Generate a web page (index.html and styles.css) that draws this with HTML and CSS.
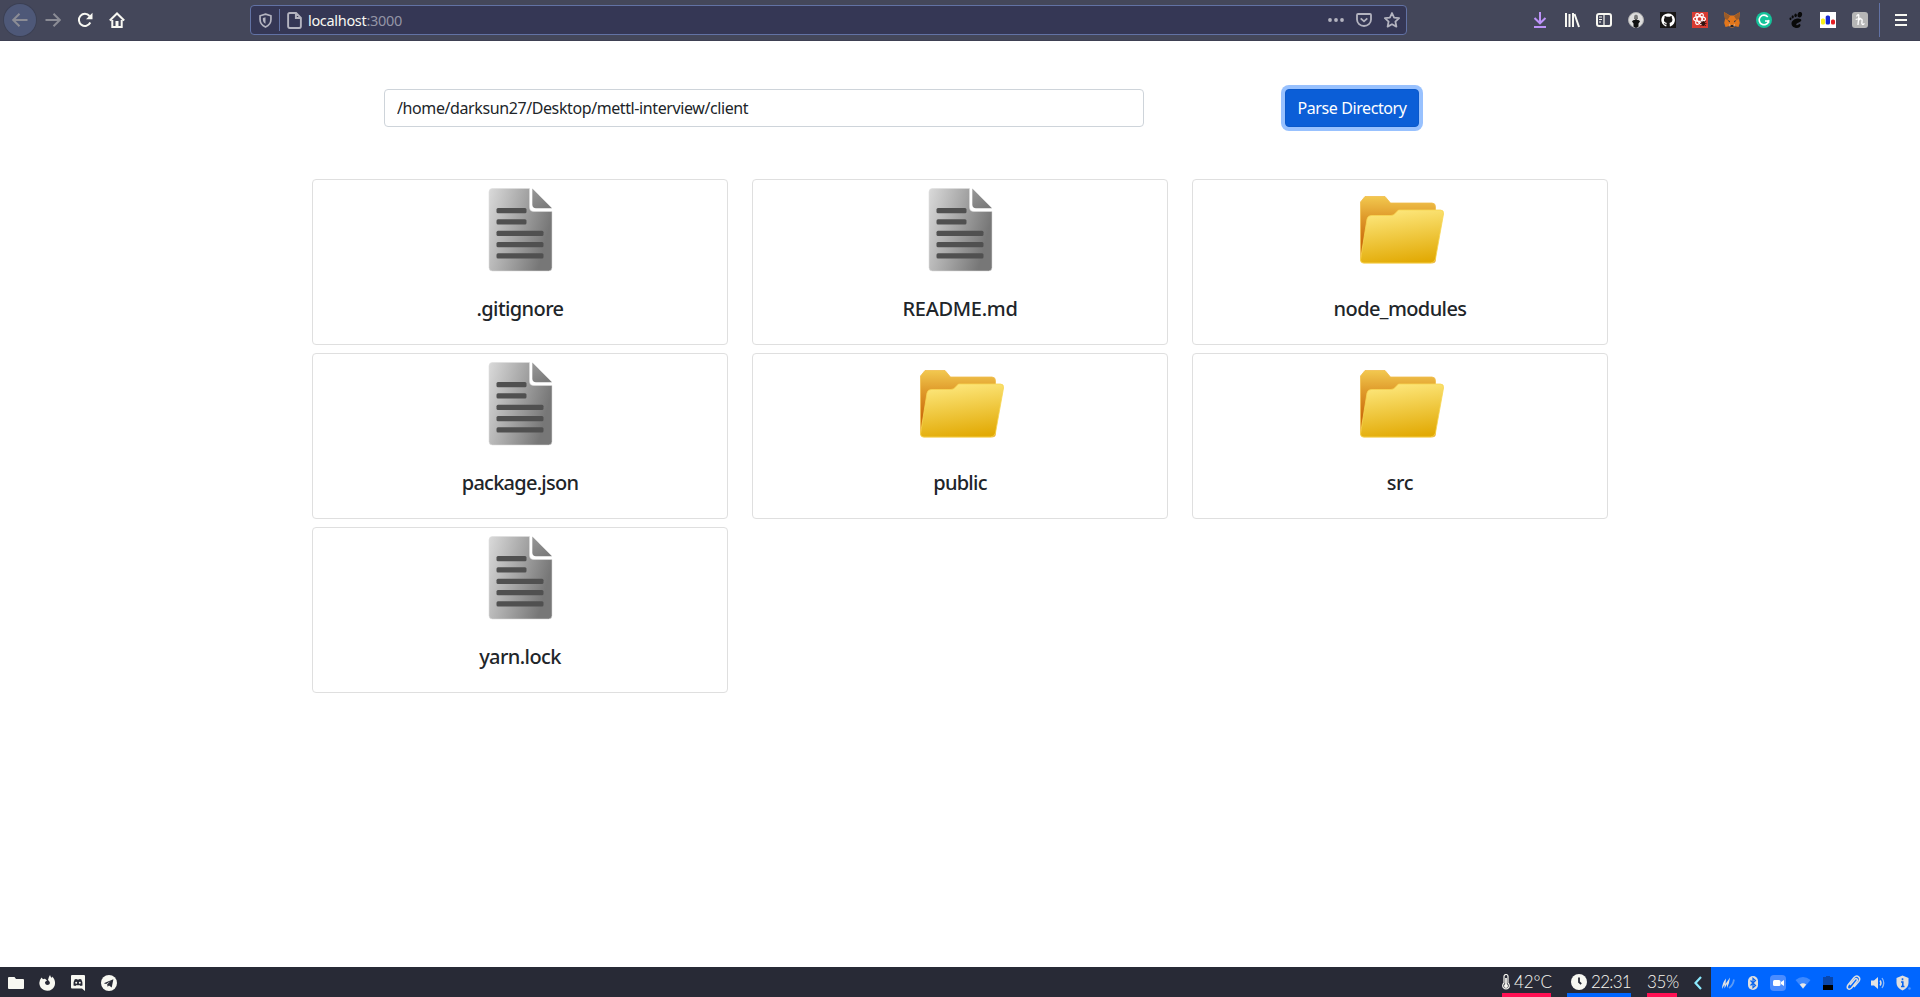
FILE: index.html
```
<!DOCTYPE html>
<html lang="en">
<head>
<meta charset="utf-8">
<title>Directory Parser</title>
<link rel="stylesheet" href="styles.css">
</head>
<body>
<svg class="defs" width="0" height="0" aria-hidden="true">
  <defs>
    <linearGradient id="paper" x1="0" y1="0" x2="1" y2=".35"><stop offset="0" stop-color="#dadada"/><stop offset=".5" stop-color="#a9a9a9"/><stop offset="1" stop-color="#777"/></linearGradient>
    <linearGradient id="fold" x1="0" y1="0" x2=".6" y2="1"><stop offset="0" stop-color="#999"/><stop offset="1" stop-color="#7b7b7b"/></linearGradient>
    <linearGradient id="back" x1="0" y1="0" x2="0" y2="1"><stop offset="0" stop-color="#f2c84f"/><stop offset=".3" stop-color="#e09c2c"/><stop offset=".7" stop-color="#cb6c0c"/><stop offset="1" stop-color="#d98a1c"/></linearGradient>
    <linearGradient id="front" x1=".35" y1="0" x2=".55" y2="1"><stop offset="0" stop-color="#fde77c"/><stop offset="1" stop-color="#e2aa05"/></linearGradient>
    <symbol id="file" viewBox="0 0 100 100">
      <path d="M22.500 7.500h37V26q0 4.500 4.500 4.500h18V86.500q0 3.500-3.500 3.500h-56q-3.500 0-3.500-3.500V11q0-3.500 3.500-3.500z" fill="url(#paper)" stroke="#ddd" stroke-opacity=".55"/>
      <path d="M62.300 7.500 82 27.200H66q-3.700 0-3.700-3.700z" fill="url(#fold)"/>
      <g fill="#505050"><rect x="26.500" y="27" width="30" height="5.200" rx="1.500"/><rect x="26.500" y="38.300" width="30" height="5.200" rx="1.500"/><rect x="26.500" y="49.700" width="47" height="5.200" rx="1.500"/><rect x="26.500" y="61" width="47" height="5.200" rx="1.500"/><rect x="26.500" y="72.200" width="47" height="5.200" rx="1.500"/></g>
    </symbol>
    <symbol id="folder" viewBox="0 0 100 100">
      <path d="M10.500 77V21l4.500-5.500h20l5.500 6.500H82q3.500 0 3.500 4V79q0 3-3 3H14q-3.500 0-3.500-5z" fill="url(#back)" stroke="#f1bd4b" stroke-width=".8"/>
      <path d="m10.500 79 6.500-41q.8-3.500 4.500-3.500H41q3 0 5-3l2.500-2.500h42q3.500 0 3 4L85.500 78q-1 4-5 4H14q-3.500 0-3.500-3z" fill="url(#front)" stroke="#f7d652" stroke-width=".8"/>
    </symbol>
  </defs>
</svg>

<header class="toolbar">
  <div class="nav">
    <span class="cell back-btn"><svg viewBox="0 0 16 16"><path class="line dim" d="M15.500 8H1.500M7.500 1.700 1.200 8l6.300 6.300"/></svg></span>
    <span class="cell"><svg viewBox="0 0 16 16"><path class="line dim" d="M.5 8h14M8.500 1.700 14.800 8l-6.300 6.300"/></svg></span>
    <span class="cell"><svg viewBox="0 0 16 16"><path class="line bold" d="M13.300 10.500A6 6 0 1 1 12.500 4"/><path class="solid" d="M15.500.8v6.400H9z"/></svg></span>
    <span class="cell"><svg viewBox="0 0 16 16"><path class="line bold" d="M.8 8.500 8 1.500l7.200 7M3.300 8v7h9.400V8"/><path class="solid" d="M6.500 9h3v6h-3z"/></svg></span>
  </div>
  <div class="url">
    <svg class="shield" viewBox="0 0 16 16"><path class="line grey" d="M8 1.200 13.800 3v4c0 4-2.500 6.500-5.800 8C4.700 13.500 2.200 11 2.200 7V3z"/><path d="M8 4.500v7C6 10.500 5.200 9 5.200 7V5.200z" class="greyfill"/></svg>
    <span class="divider"></span>
    <svg class="page" viewBox="0 0 16 16"><path class="line grey" d="M3.500 1h6L14 5.500V13.500q0 1.500-1.500 1.500h-9Q2 15 2 13.500v-11Q2 1 3.500 1zM9.300 1v4.700H14"/></svg>
    <span class="address">localhost<span class="port">:3000</span></span>
    <span class="cell28 first"><svg viewBox="0 0 16 16"><g class="greyfill"><circle cx="2" cy="8" r="1.900"/><circle cx="8" cy="8" r="1.900"/><circle cx="14" cy="8" r="1.900"/></g></svg></span>
    <span class="cell28"><svg viewBox="0 0 16 16"><path class="line grey" d="M2 2h12q1 0 1 1v4.500a7 6.500 0 0 1-14 0V3q0-1 1-1z"/><path class="line grey" d="m4.700 6.300 3.300 3 3.300-3"/></svg></span>
    <span class="cell28"><svg viewBox="0 0 16 16"><path class="line grey" stroke-linejoin="round" d="m8 1 2.100 4.600 5 .6-3.700 3.400 1 5L8 12.200l-4.400 2.400 1-5L.9 6.200l5-.6z"/></svg></span>
  </div>
  <div class="extensions">
    <span class="cell"><svg viewBox="0 0 16 16"><path class="line purple" d="M8 0v11M2.500 6 8 11.300 13.500 6M2 15h12"/></svg></span>
    <span class="cell"><svg viewBox="0 0 16 16"><path class="line bold" d="M2 1v14M5.500 2v13M9 1v14M10.500 2 15 15"/></svg></span>
    <span class="cell"><svg viewBox="0 0 16 16"><rect class="line bold" x="1" y="2" width="14" height="12" rx="2"/><path class="line thin" d="M8 2v12M3 5h3M3 7.500h3M3 10h2"/></svg></span>
    <span class="cell"><svg viewBox="0 0 16 16"><circle cx="8" cy="8" r="7.500" fill="#dedede" stroke="#b0b0b0"/><path d="M6.300 3.500 8 2.500l1.700 1 .3 3.500H6z" fill="#777"/><path d="M5.500 14.500v-3L4 9.500q1-2 2.500-1.500L8 7l1.500 1q1.800-.5 2.500 1.500l-1.500 2v3L8 16z" fill="#111"/></svg></span>
    <span class="cell"><svg viewBox="0 0 16 16"><rect width="16" height="16" fill="#191717"/><path fill="#fff" d="M8 1.500a6.600 6.600 0 0 0-2.100 12.900c.4.100.5-.2.500-.4v-1.400c-1.800.4-2.200-.7-2.600-1.300.9-.2 1.300 1 2.700.6 0-.4.200-.7.400-.9-2-.3-3-1.200-3-3.200 0-.7.300-1.400.7-1.900-.2-.6-.1-1.400.1-1.900.8 0 1.400.4 2 .8a7 7 0 0 1 3 0c.6-.4 1.200-.8 2-.8.200.6.200 1.300.1 1.900.4.500.6 1.100.6 1.900 0 2-1.200 2.900-3 3.200.3.300.4.700.4 1.300V14c0 .3.100.5.500.4A6.600 6.600 0 0 0 8 1.500z"/></svg></span>
    <span class="cell"><svg viewBox="0 0 16 16"><rect width="16" height="16" fill="#d83b32"/><g fill="none" stroke="#fff" stroke-width="1.200"><ellipse cx="7.500" cy="7" rx="6" ry="2.400"/><ellipse cx="7.500" cy="7" rx="6" ry="2.400" transform="rotate(60 7.500 7)"/><ellipse cx="7.500" cy="7" rx="6" ry="2.400" transform="rotate(120 7.500 7)"/></g><ellipse cx="11.300" cy="11.500" rx="1.800" ry="2.600" fill="#30130f"/><path d="m8.500 9 5.500 5M14 9l-5.500 5M8 11.500h6.500" stroke="#30130f" stroke-width=".8"/></svg></span>
    <span class="cell"><svg viewBox="0 0 16 16"><path d="m0 0 6 3.500h4L16 0l-1 7 .8 4-1.300 4-4-1-1 1.500h-3L5.500 14l-4 1L.2 11 1 7z" fill="#e2761b"/><path d="m0 0 6 4-2.500 4L1 7zM16 0l-6 4 2.500 4L15 7z" fill="#9a5b28"/><path d="m3.500 8 2.500 1-.5 1.500zM12.500 8 10 9l.5 1.500z" fill="#233447"/><path d="M6.500 13h3l.5 2H6z" fill="#2b2522"/><path d="M5 11.500 6.500 13 6 15zM11 11.500 9.500 13l.5 2z" fill="#d7c1b3"/></svg></span>
    <span class="cell"><svg viewBox="0 0 16 16"><circle cx="8" cy="8" r="8" fill="#15c39a"/><path d="M11.800 5A4.800 4.800 0 1 0 12.700 9H9" fill="none" stroke="#fff" stroke-width="1.600"/><path d="m12.500 7.500 1 3.500-3-1z" fill="#fff"/></svg></span>
    <span class="cell"><svg viewBox="0 0 16 16"><g fill="#090909"><ellipse cx="11.800" cy="2.700" rx="2.200" ry="2.800" transform="rotate(18 11.800 2.700)"/><ellipse cx="7.600" cy="3.300" rx="1.200" ry="1.900"/><ellipse cx="4.700" cy="4.800" rx="1.100" ry="1.600"/><ellipse cx="2.500" cy="6.800" rx="1" ry="1.400"/><path d="M12.500 7C9 5.300 3.500 8 3.500 11.500c0 3 3 4.500 5.500 4.500 3.500 0 4.500-4 2.500-4-1.200 0-1.500 1.700-2.700 1.200-1.500-.8.200-2.200 2-2.800C13 9.600 14.300 8 12.500 7z"/></g></svg></span>
    <span class="cell"><svg viewBox="0 0 16 16"><rect width="16" height="16" fill="#fff"/><rect x="1" y="6.500" width="4" height="6" rx="1.500" fill="#f8ed19"/><rect x="5.700" y="3.500" width="4.300" height="9" rx="1.500" fill="#1528d4"/><rect x="11" y="7.500" width="4" height="5" rx="1.500" fill="#e51e23"/></svg></span>
    <span class="cell"><svg viewBox="0 0 16 16"><rect width="16" height="16" rx="3" fill="#b6b6b6"/><path d="M4.500 4.500C5.500 2 7 2 6.800 4L6 13M3.700 7.500l5-1.500M6.300 9c1-2.500 4-3 3.800-.5-.2 2-.7 4 .8 4 .8 0 1.200-.7 1.500-1.200" fill="none" stroke="#fff" stroke-width="1.300"/></svg></span>
  </div>
  <span class="menu-divider"></span>
  <span class="cell menu"><svg viewBox="0 0 16 16"><path class="line bold" d="M2 3h12M2 8h12M2 13h12"/></svg></span>
</header>

<main class="container">
  <form class="search">
    <input class="path" type="text" value="/home/darksun27/Desktop/mettl-interview/client">
    <button class="parse" type="button">Parse Directory</button>
  </form>
  <section class="grid">
    <article class="card"><svg class="pic"><use href="#file"/></svg><h5>.gitignore</h5></article>
    <article class="card"><svg class="pic"><use href="#file"/></svg><h5 class="loose">README.md</h5></article>
    <article class="card"><svg class="pic"><use href="#folder"/></svg><h5>node_modules</h5></article>
    <article class="card"><svg class="pic"><use href="#file"/></svg><h5 class="tight">package.json</h5></article>
    <article class="card"><svg class="pic"><use href="#folder"/></svg><h5 class="tight">public</h5></article>
    <article class="card"><svg class="pic"><use href="#folder"/></svg><h5 class="loose">src</h5></article>
    <article class="card"><svg class="pic"><use href="#file"/></svg><h5>yarn.lock</h5></article>
  </section>
</main>

<footer class="panel">
  <div class="apps">
    <svg viewBox="0 0 16 16"><path class="solid" d="M1 2h5.500L8 4h7q1 0 1 1v8q0 1-1 1H1q-1 0-1-1V3q0-1 1-1z"/></svg>
    <svg viewBox="0 0 16 16"><path class="solid" d="M2.500 2.500 4 4.200q1-.5 2-.4L8 5.500 6 7q0 3 2.500 3 2 0 2.500-2-.5-2-2-3 .5-3 2-5 .5 2 2 3l.2-1.500C17 5 17 11 13.300 14A8 8 0 0 1 .3 8Q.4 5 2.500 2.500z"/></svg>
    <svg viewBox="0 0 16 16"><path fill-rule="evenodd" class="solid" d="M2 0h12q1 0 1 1v15l-3-2.500H2q-1 0-1-1V1q0-1 1-1zm1.500 10.500 2 .5.500-.8h4l.5.8 2-.5q.3-4-1.300-6.200L9.500 4 9 4.500H7L6.500 4l-1.700.3Q3.200 6.500 3.500 10.500z"/><circle class="solid" cx="6.200" cy="7.800" r="1"/><circle class="solid" cx="9.800" cy="7.800" r="1"/></svg>
    <svg viewBox="0 0 16 16"><circle class="solid" cx="8" cy="8" r="8"/><path d="m2.800 8.200 9.600-4-1.700 8.200-2.700-2-1.400 1.400-.4-2.500 3.600-3.300-4.700 2.900z" fill="#282a36"/></svg>
  </div>
  <div class="status">
    <span class="stat temp"><svg viewBox="0 0 8 16"><path d="M2 9V2.500a2 2 0 0 1 4 0V9a3.300 3.300 0 1 1-4 0z" fill="none" stroke="#f8f8f2" stroke-width="1.200"/><path d="M4 4v8" stroke="#f8f8f2" stroke-width="1.700"/><circle class="solid" cx="4" cy="12" r="2"/></svg><span>42°C</span></span>
    <span class="stat clock"><svg viewBox="0 0 16 16"><circle class="solid" cx="8" cy="8" r="8"/><path d="M8 3.500V8l2.200 2" fill="none" stroke="#282a36" stroke-width="1.800"/></svg><span>22:31</span></span>
    <span class="stat battery"><span>35%</span></span>
    <svg class="chev" viewBox="0 0 8 14"><path d="M7 1 1.500 7 7 13" fill="none" stroke="#8be9fd" stroke-width="2.200"/></svg>
  </div>
  <div class="tray">
    <span><svg viewBox="0 0 16 16"><path d="M2 14Q2 8 6 3.500L5.500 9 10 2.500Q9.500 8 7 13V9L4.500 13.500V9.500z" fill="#e2e2e2"/><path d="M9 13q4-2.500 5-8.500" fill="none" stroke="#5c9bf5" stroke-width="1.700"/></svg></span>
    <span><svg viewBox="0 0 16 16"><rect x="3" y="1" width="10" height="14" rx="5" fill="#dfdfdf"/><path d="m5.500 5.500 5 5L8 12.700V3.300l2.500 2.200-5 5" fill="none" stroke="#0864ed" stroke-width="1.200"/></svg></span>
    <span><svg viewBox="0 0 16 16"><rect width="16" height="16" rx="4" fill="#4a8cff"/><rect x="3" y="5" width="7.500" height="6" rx="1.500" fill="#fff"/><path d="m11 7 3-2v6l-3-2z" fill="#fff"/></svg></span>
    <span><svg viewBox="0 0 16 16"><path d="M.5 5Q8-1 15.500 5L8 14z" fill="#3d89ff"/><path d="M4.800 9.500Q8 7 11.200 9.500L8 13.500z" fill="#e7e7e7"/></svg></span>
    <span><svg viewBox="0 0 16 16"><path d="M3 2h3V1h4v1h3v8H3z" fill="#0947ad"/><path d="M3 10h10v5H3z" fill="#000"/></svg></span>
    <span><svg viewBox="0 0 16 16"><path d="m5 10 5-6q1-1 2 0t0 2l-5.500 7q-2 2-3.500.7T3 10l6-7.500q2.500-2.500 4.600-.6t.3 4.500L9 12" fill="none" stroke="#dfdfdf" stroke-width="1.500"/></svg></span>
    <span><svg viewBox="0 0 16 16"><path d="M1 5.500h3l4-3.500v12l-4-3.500H1z" fill="#e2e2e2"/><path d="M10 5.500q2 2.500 0 5" fill="none" stroke="#dfdfdf" stroke-width="1.400"/><path d="M12 3q3.500 5 0 10" fill="none" stroke="#8db9fa" stroke-width="1.300"/></svg></span>
    <span><svg viewBox="0 0 16 16"><path d="m7.500.5 6 2.500v5q0 5-6 7.500-6-2.500-6-7.500V3z" fill="#dfdfdf"/><path d="M7.500 3.300v2M6 7h1.800v4.500M6 11.500h3.500" fill="none" stroke="#0864ed" stroke-width="1.600"/><circle cx="14.500" cy="13.500" r="1.300" fill="#4b91fa"/></svg></span>
  </div>
</footer>
</body>
</html>
```
FILE: styles.css
```
* { box-sizing: border-box; }
body {
  margin: 0;
  height: 997px;
  overflow: hidden;
  display: flex;
  flex-direction: column;
  background: #fff;
  color: #212529;
  font: 16px/1.5 "Noto Sans", sans-serif;
}
.defs { position: absolute; }
svg { display: block; flex: none; }

.line { fill: none; stroke: #f8f8f2; stroke-width: 2; }
.line.thin { stroke-width: 1.2; }
.line.dim { stroke: #8b8c95; }
.line.grey { stroke: #b4b4c0; stroke-width: 1.8; }
.line.purple { stroke: #bd93f9; }
.greyfill { fill: #b4b4c0; }
.solid { fill: #f8f8f2; }

.toolbar {
  height: 41px;
  flex: none;
  display: flex;
  align-items: flex-start;
  padding: 4px 3px 0 4px;
  background: #44475a;
  border-bottom: 1px solid #3e4052;
}
.nav { display: flex; width: 246px; }
.cell {
  width: 32px;
  height: 32px;
  flex: none;
  display: flex;
  align-items: center;
  justify-content: center;
}
.cell svg { width: 16px; height: 16px; }
.back-btn { background: #4e5878; border-radius: 50%; box-shadow: 0 0 0 1px #3c4054; margin-right: 1px; }
.url {
  width: 1157px;
  height: 30px;
  margin-top: 1px;
  display: flex;
  align-items: center;
  background: #353755;
  border: 1px solid #6272a4;
  border-radius: 4px;
}
.shield { width: 15px; height: 15px; margin-left: 7px; }
.divider { width: 1px; height: 22px; margin-left: 6px; background: #6272a4; }
.page { width: 17px; height: 17px; margin-left: 6px; }
.address {
  margin-left: 5px;
  padding-bottom: 1px;
  font-size: 14.5px;
  line-height: 22px;
  letter-spacing: -.32px;
  color: #f8f8f2;
}
.port { color: #9495a6; }
.cell28 { width: 28px; height: 28px; display: flex; align-items: center; justify-content: center; }
.cell28.first { margin-left: auto; }
.cell28 svg { width: 16px; height: 16px; }
.extensions { display: flex; margin-left: 117px; }
.menu-divider { width: 1px; height: 34px; margin: -1px 5px 0 3px; background: #6272a4; }

.container { width: 1320px; margin: 0 auto; flex: 1; }
.search { display: flex; padding: 48px 0 0 84px; margin: 0; height: 138px; }
.path {
  width: 760px;
  height: 38px;
  padding: 6px 12px;
  border: 1px solid #ced4da;
  border-radius: 4px;
  color: #212529;
  background: #fff;
  font: 16px/24px "Noto Sans", sans-serif;
  letter-spacing: -.4px;
}
.parse {
  width: 134px;
  height: 38px;
  margin-left: 141px;
  padding: 6px 0;
  border: 1px solid #0a58ca;
  border-radius: 4px;
  background: #0b5ed7;
  box-shadow: 0 0 0 4px #98c1fe;
  color: #fff;
  font: 16px/24px "Noto Sans", sans-serif;
  letter-spacing: -.4px;
}
.grid {
  display: grid;
  grid-template-columns: repeat(3, 416px);
  gap: 8px 24px;
  padding: 0 12px;
}
.card {
  height: 166px;
  display: flex;
  flex-direction: column;
  align-items: center;
  border: 1px solid #dfdfdf;
  border-radius: 4px;
}
.pic { width: 100px; height: 100px; margin-top: 1px; }
h5 { margin: 16px 0 0; font-size: 20px; line-height: 24px; font-weight: 500; letter-spacing: -.6px; }
h5.loose { letter-spacing: -.3px; }
h5.tight { letter-spacing: -.75px; }

.panel {
  height: 30px;
  flex: none;
  display: flex;
  background: #282a36;
}
.apps { display: flex; align-items: center; gap: 15px; padding: 2px 0 0 8px; }
.apps svg { width: 16px; height: 16px; }
.status { display: flex; margin-left: auto; color: #f8f8f2; font: 300 17px/24px Lato, sans-serif; }
.stat { display: flex; height: 30px; align-items: center; white-space: nowrap; border-bottom: 4px solid #ff1053; }
.temp { width: 49px; gap: 4px; margin-right: 16px; letter-spacing: -.1px; }
.temp svg { width: 8px; height: 16px; margin-top: 4px; }
.clock { width: 64px; gap: 4px; margin-right: 16px; padding-left: 4px; border-color: #06f; letter-spacing: -.7px; }
.clock svg { width: 16px; height: 16px; margin-top: 4px; }
.stat span { padding-top: 3px; }
.battery { width: 30px; }
.battery span { letter-spacing: -.4px; }
.chev { width: 8px; height: 14px; margin: 9px 9px 0 17px; }
.tray { display: flex; width: 209px; padding: 1px 0 0 4px; background: #06f; }
.tray span { width: 25px; height: 29px; display: flex; align-items: center; justify-content: center; }
.tray svg { width: 16px; height: 16px; }
```
